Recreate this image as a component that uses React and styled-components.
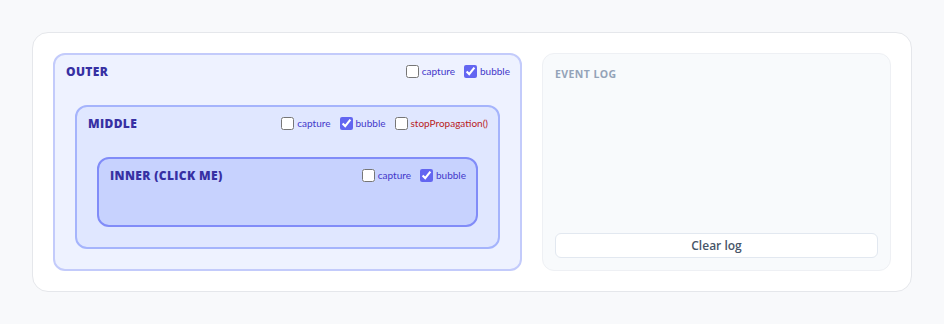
import React from "react";
import styled, { createGlobalStyle } from "styled-components";

const Global = createGlobalStyle`
  html, body { margin: 0; padding: 0; background: #f8f9fb; }
  body { font-family: "Open Sans", "Liberation Sans", sans-serif; }
  * { box-sizing: border-box; }
`;

const Page = styled.div`
  padding: 32px;
`;

const Card = styled.div`
  background: #ffffff;
  border: 1px solid #e5e7eb;
  border-radius: 16px;
  padding: 20px;
  display: grid;
  grid-template-columns: minmax(0, 1fr) 349px;
  gap: 20px;
  align-items: stretch;
`;

const Box = styled.div`
  border: 2px solid ${(p) => p.$border};
  background: ${(p) => p.$bg};
  border-radius: 12px;
  padding: 10px;
  min-height: ${(p) => p.$minH || 0}px;
  display: flex;
  flex-direction: column;
`;

const BoxHeader = styled.div`
  display: flex;
  align-items: center;
  justify-content: space-between;
  height: 13px;
  padding-left: 1px;
`;

const BoxLabel = styled.span`
  font-family: "Open Sans", sans-serif;
  font-weight: 800;
  font-size: 12px;
  line-height: 13px;
  letter-spacing: 0.03em;
  color: #3730a3;
  text-transform: uppercase;
`;

const Options = styled.div`
  display: flex;
  align-items: center;
  gap: 9px;
`;

const Option = styled.label`
  display: flex;
  align-items: center;
  gap: 3px;
  font-family: Lato, "Open Sans", sans-serif;
  font-size: 10px;
  line-height: 13px;
  color: ${(p) => (p.$danger ? "#b91c1c" : "#4338ca")};
  cursor: pointer;
`;

const Check = styled.input.attrs({ type: "checkbox" })`
  width: 13px;
  height: 13px;
  margin: 0;
  accent-color: #6366f1;
`;

const Nested = styled.div`
  margin-top: 27px;
  padding: 0 10px 10px 10px;
`;

const LogPanel = styled.div`
  border: 1px solid #eef0f4;
  background: #f8fafc;
  border-radius: 12px;
  padding: 12px;
  display: flex;
  flex-direction: column;
`;

const LogTitle = styled.div`
  font-family: "Open Sans", sans-serif;
  font-weight: 700;
  font-size: 10.5px;
  letter-spacing: 0.04em;
  color: #94a3b8;
  line-height: 16px;
`;

const LogBody = styled.div`
  flex: 1;
`;

const ClearButton = styled.button`
  height: 25px;
  width: 100%;
  border: 1px solid #e2e8f0;
  background: #ffffff;
  border-radius: 6px;
  font-family: "Open Sans", sans-serif;
  font-weight: 600;
  font-size: 12px;
  color: #475569;
  cursor: pointer;
`;

function Level({ name, border, bg, minH, opts, children }) {
  return (
    <Box $border={border} $bg={bg} $minH={minH}>
      <BoxHeader>
        <BoxLabel>{name}</BoxLabel>
        <Options>
          {opts.map((o) => (
            <Option key={o.label} $danger={o.danger}>
              <Check defaultChecked={o.checked} />
              {o.label}
            </Option>
          ))}
        </Options>
      </BoxHeader>
      {children && <Nested>{children}</Nested>}
    </Box>
  );
}

const base = [
  { label: "capture", checked: false },
  { label: "bubble", checked: true },
];

export default function App() {
  return (
    <>
      <Global />
      <Page>
        <Card>
          <Level name="Outer" border="#c3cbfb" bg="#eef2ff" opts={base}>
            <Level
              name="Middle"
              border="#a5b4fc"
              bg="#e0e7ff"
              opts={[...base, { label: "stopPropagation()", checked: false, danger: true }]}
            >
              <Level name="Inner (click me)" border="#818cf8" bg="#c7d2fe" minH={70} opts={base} />
            </Level>
          </Level>
          <LogPanel>
            <LogTitle>EVENT LOG</LogTitle>
            <LogBody />
            <ClearButton>Clear log</ClearButton>
          </LogPanel>
        </Card>
      </Page>
    </>
  );
}
